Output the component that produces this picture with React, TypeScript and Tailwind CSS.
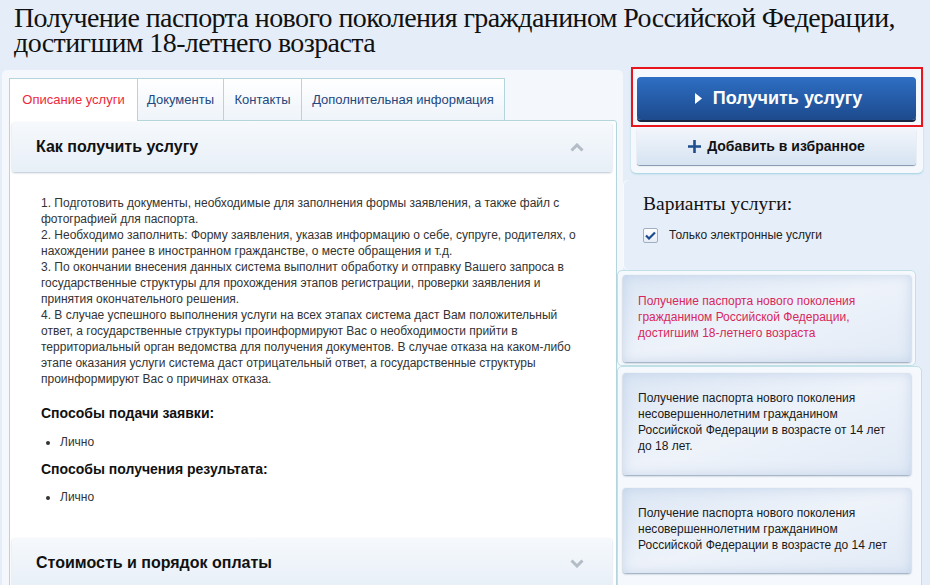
import React from 'react';

const steps = [
  '1. Подготовить документы, необходимые для заполнения формы заявления, а также файл с фотографией для паспорта.',
  '2. Необходимо заполнить: Форму заявления, указав информацию о себе, супруге, родителях, о нахождении ранее в иностранном гражданстве, о месте обращения и т.д.',
  '3. По окончании внесения данных система выполнит обработку и отправку Вашего запроса в государственные структуры для прохождения этапов регистрации, проверки заявления и принятия окончательного решения.',
  '4. В случае успешного выполнения услуги на всех этапах система даст Вам положительный ответ, а государственные структуры проинформируют Вас о необходимости прийти в территориальный орган ведомства для получения документов. В случае отказа на каком-либо этапе оказания услуги система даст отрицательный ответ, а государственные структуры проинформируют Вас о причинах отказа.',
];

const tabs = [
  { label: 'Описание услуги', w: 'w-[129px]' },
  { label: 'Документы', w: 'w-[86px]' },
  { label: 'Контакты', w: 'w-[78px]' },
  { label: 'Дополнительная информация', w: 'w-[203px]' },
];

const variants = [
  'Получение паспорта нового поколения гражданином Российской Федерации, достигшим 18-летнего возраста',
  'Получение паспорта нового поколения несовершеннолетним гражданином Российской Федерации в возрасте от 14 лет до 18 лет.',
  'Получение паспорта нового поколения несовершеннолетним гражданином Российской Федерации в возрасте до 14 лет',
];

function Chevron({ up }: { up?: boolean }) {
  return (
    <svg width="14" height="9" viewBox="0 0 14 9" className="text-[#b4bcc6]">
      <path
        d={up ? 'M1.5 7.5 L7 2 L12.5 7.5' : 'M1.5 1.5 L7 7 L12.5 1.5'}
        fill="none"
        stroke="currentColor"
        strokeWidth="3"
      />
    </svg>
  );
}

function AccordionHead({ title, up }: { title: string; up?: boolean }) {
  return (
    <div className="flex h-[50px] items-center justify-between rounded-[3px] bg-gradient-to-b from-[#f6f9fc] to-[#e7eff7] pl-[24px] pr-[28px] shadow-[0_1px_2px_rgba(120,140,170,0.5)]">
      <span className="text-[16px] font-bold text-[#111]">{title}</span>
      <Chevron up={up} />
    </div>
  );
}

function VariantCard({ text, h, active }: { text: string; h: string; active?: boolean }) {
  return (
    <div
      className={
        'flex items-center rounded-[3px] bg-gradient-to-br from-[#dbe6f4] via-[#eef3fa] to-[#e1eaf6] pb-[4px] pl-[15px] pr-[20px] text-[12px] leading-[16px] shadow-[0_1px_2px_rgba(100,120,150,0.7),inset_0_0_12px_rgba(160,185,220,0.45)] ' +
        h +
        (active ? ' text-[#d8275c]' : ' text-[#1a1a1a]')
      }
    >
      <p>{text}</p>
    </div>
  );
}

export default function App() {
  return (
    <div className="h-[585px] w-[930px] overflow-hidden bg-[#e5eef8] font-['Liberation_Sans',Arial,sans-serif]">
      <h1 className="px-[14px] pt-[5px] font-['Liberation_Serif',serif] text-[28px] leading-[25px] tracking-[-0.6px] text-[#111]">
        Получение паспорта нового поколения гражданином Российской Федерации, достигшим 18-летнего возраста
      </h1>

      <div className="mt-[15px] flex pl-[2px]">
        {/* left column */}
        <div className="h-[515px] w-[621px] shrink-0 rounded-t-[5px] bg-[#f4f8fc] pl-[7px] pt-[8px]">
          <div className="flex h-[42px] items-stretch">
            {tabs.map((t, i) => (
              <div
                key={t.label}
                className={
                  'flex items-center justify-center border border-b-0 border-[#b3d6dc] text-[13px] ' +
                  t.w +
                  (i === 0
                    ? ' relative z-10 -mb-px bg-white text-[#ec2a3b]'
                    : ' border-l-0 bg-gradient-to-b from-white to-[#eef4fa] text-[#23477f]')
                }
              >
                {t.label}
              </div>
            ))}
          </div>
          <div className="h-[480px] w-[608px] rounded-tr-[3px] border border-[#b3d6dc] bg-white pl-[2px] pr-[4px] pt-[1px]">
            <AccordionHead title="Как получить услугу" up />
            <div className="pl-[29px] pr-[26px] pt-[23px] text-[12px] leading-[16px] text-[#333]">
              {steps.map((s) => (
                <p key={s}>{s}</p>
              ))}
              <h3 className="mt-[17px] text-[14px] font-bold leading-[18px] text-[#111]">Способы подачи заявки:</h3>
              <ul className="mt-[12px] list-disc pl-[19px]">
                <li>Лично</li>
              </ul>
              <h3 className="mt-[10px] text-[14px] font-bold leading-[18px] text-[#111]">Способы получения результата:</h3>
              <ul className="mt-[11px] list-disc pl-[19px]">
                <li>Лично</li>
              </ul>
            </div>
            <div className="mt-[33px]">
              <AccordionHead title="Стоимость и порядок оплаты" />
            </div>
          </div>
        </div>

        {/* right column */}
        <div className="-mt-[3px] w-[307px] shrink-0">
          <div className="ml-[8px] w-[292px] rounded-[5px] bg-[#f5f9fd] pb-[8px] shadow-[0_1px_2px_rgba(150,205,220,0.9)]">
            <div className="border-2 border-[#e8141e] pb-[5px] pl-[4px] pr-[5px] pt-[8px]">
              <button className="flex h-[43px] w-full items-center justify-center gap-[11px] rounded-[4px] bg-gradient-to-b from-[#2e6fc4] to-[#1d4a8d] pl-[4px] text-[18px] font-bold text-white shadow-[0_2px_0_#16263f]">
                <svg width="7" height="11" viewBox="0 0 7 11">
                  <path d="M0 0 L7 5.5 L0 11 Z" fill="#fff" />
                </svg>
                Получить услугу
              </button>
            </div>
            <button className="ml-[6px] mt-[1px] flex h-[37px] w-[279px] items-center justify-center gap-[6px] rounded-[3px] bg-gradient-to-b from-[#f2f6fb] to-[#d6e3f2] text-[14px] font-bold text-[#111] shadow-[0_1px_1px_rgba(100,120,150,0.8)]">
              <svg width="13" height="13" viewBox="0 0 13 13">
                <path d="M6.5 0 V13 M0 6.5 H13" stroke="#1f4e8f" strokeWidth="2.6" />
              </svg>
              Добавить в избранное
            </button>
          </div>

          <div className="mt-[7px] h-[90px] rounded-l-[5px] bg-[#e6eff9] pl-[20px] pt-[12px] shadow-[inset_1px_0_0_#f8fbff]">
            <div className="font-['Liberation_Serif',serif] text-[19.5px] leading-[24px] text-[#111]">Варианты услуги:</div>
            <label className="mt-[10px] flex items-center gap-[11px] text-[12px] text-[#222]">
              <span className="flex h-[15px] w-[15px] items-center justify-center rounded-[2px] border border-[#9fb0c4] bg-gradient-to-b from-white to-[#e5ecf4]">
                <svg width="11" height="9" viewBox="0 0 11 9">
                  <path d="M1 4.5 L4 7.5 L10 1.5" fill="none" stroke="#1d4a8d" strokeWidth="2.2" />
                </svg>
              </span>
              Только электронные услуги
            </label>
          </div>

          <div className="relative -ml-[6px] w-[299px] rounded-[5px] border border-[#bfe0e6] bg-[#f5f9fd] pb-[3px] pl-[5px] pr-[4px] pt-[4px]">
            <VariantCard text={variants[0]} h="h-[87px]" active />
          </div>
          <div className="relative -ml-[6px] flex h-[230px] w-[305px] flex-col gap-[13px] rounded-[5px] border border-[#bfe0e6] bg-[#f5f9fd] pl-[5px] pr-[10px] pt-[6px]">
            <VariantCard text={variants[1]} h="h-[102px]" />
            <VariantCard text={variants[2]} h="h-[85px]" />
          </div>
        </div>
      </div>
    </div>
  );
}
